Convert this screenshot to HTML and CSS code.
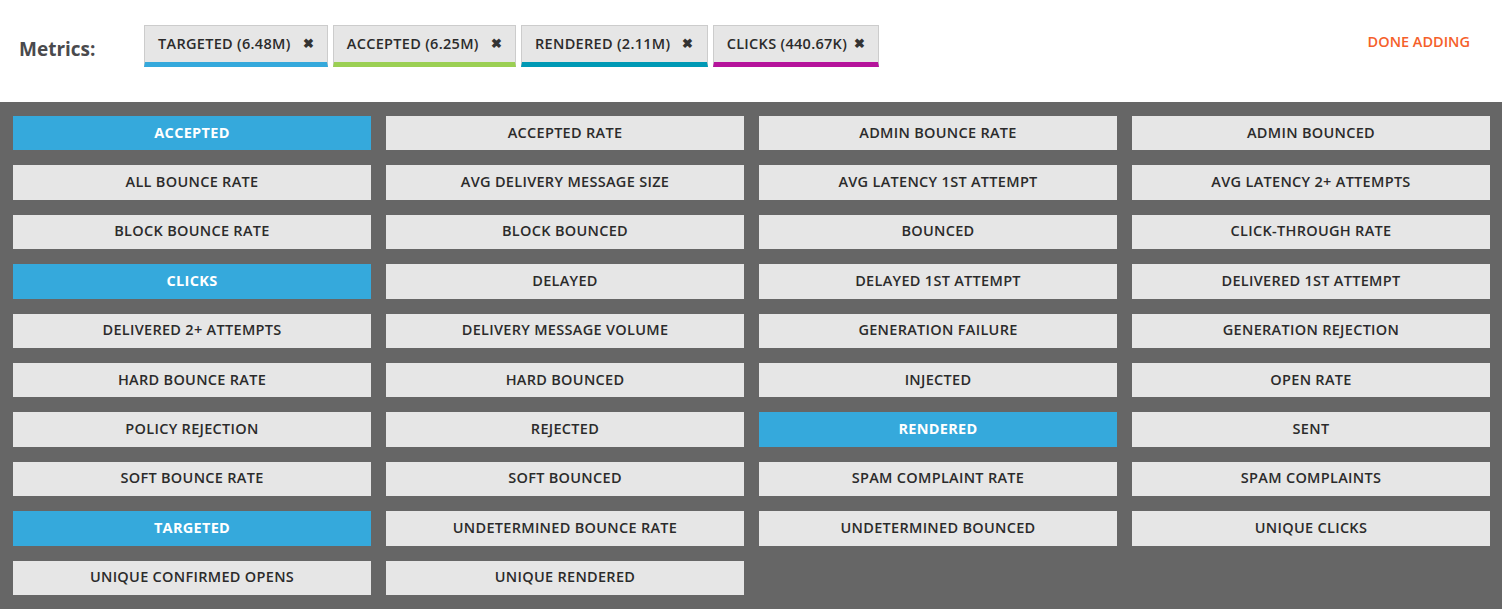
FILE: index.html
```html
<!DOCTYPE html>
<html>
<head>
<meta charset="utf-8">
<link rel="stylesheet" href="styles.css">
</head>
<body>
<div class="header">
  <div class="label">Metrics:</div>
  <div class="tags">
    <div class="tag tag-blue"><span class="tag-text">TARGETED (6.48M)</span><span class="x">&#10006;</span></div>
    <div class="tag tag-green"><span class="tag-text">ACCEPTED (6.25M)</span><span class="x">&#10006;</span></div>
    <div class="tag tag-teal"><span class="tag-text">RENDERED (2.11M)</span><span class="x">&#10006;</span></div>
    <div class="tag tag-pink"><span class="tag-text">CLICKS (440.67K)</span><span class="x">&#10006;</span></div>
  </div>
  <div class="done">DONE ADDING</div>
</div>
<div class="panel">
  <div class="grid">
    <div class="btn active">ACCEPTED</div>
    <div class="btn">ACCEPTED RATE</div>
    <div class="btn">ADMIN BOUNCE RATE</div>
    <div class="btn">ADMIN BOUNCED</div>
    <div class="btn">ALL BOUNCE RATE</div>
    <div class="btn">AVG DELIVERY MESSAGE SIZE</div>
    <div class="btn">AVG LATENCY 1ST ATTEMPT</div>
    <div class="btn">AVG LATENCY 2+ ATTEMPTS</div>
    <div class="btn">BLOCK BOUNCE RATE</div>
    <div class="btn">BLOCK BOUNCED</div>
    <div class="btn">BOUNCED</div>
    <div class="btn">CLICK-THROUGH RATE</div>
    <div class="btn active">CLICKS</div>
    <div class="btn">DELAYED</div>
    <div class="btn">DELAYED 1ST ATTEMPT</div>
    <div class="btn">DELIVERED 1ST ATTEMPT</div>
    <div class="btn">DELIVERED 2+ ATTEMPTS</div>
    <div class="btn">DELIVERY MESSAGE VOLUME</div>
    <div class="btn">GENERATION FAILURE</div>
    <div class="btn">GENERATION REJECTION</div>
    <div class="btn">HARD BOUNCE RATE</div>
    <div class="btn">HARD BOUNCED</div>
    <div class="btn">INJECTED</div>
    <div class="btn">OPEN RATE</div>
    <div class="btn">POLICY REJECTION</div>
    <div class="btn">REJECTED</div>
    <div class="btn active">RENDERED</div>
    <div class="btn">SENT</div>
    <div class="btn">SOFT BOUNCE RATE</div>
    <div class="btn">SOFT BOUNCED</div>
    <div class="btn">SPAM COMPLAINT RATE</div>
    <div class="btn">SPAM COMPLAINTS</div>
    <div class="btn active">TARGETED</div>
    <div class="btn">UNDETERMINED BOUNCE RATE</div>
    <div class="btn">UNDETERMINED BOUNCED</div>
    <div class="btn">UNIQUE CLICKS</div>
    <div class="btn">UNIQUE CONFIRMED OPENS</div>
    <div class="btn">UNIQUE RENDERED</div>
  </div>
</div>
</body>
</html>
```
FILE: styles.css
```css
* { box-sizing: border-box; }
html, body { margin: 0; padding: 0; }
body {
  width: 1502px;
  height: 609px;
  overflow: hidden;
  background: #fff;
  font-family: "Open Sans", "Liberation Sans", sans-serif;
  color: #333;
}
.header {
  height: 102px;
  display: flex;
  align-items: flex-start;
  padding: 25px 0 0 19px;
}
.label {
  font-family: "Open Sans", sans-serif;
  font-weight: 700;
  font-size: 19px;
  color: #4a4a4d;
  margin-top: 11px;
  width: 125px;
}
.tags {
  display: flex;
  gap: 5px;
  flex: 1;
}
.tag {
  display: flex;
  align-items: center;
  height: 42px;
  background: #e6e6e6;
  border: 1px solid #cccccc;
  border-bottom: 5px solid #35a9dc;
  padding: 0 13px 2px 13px;
  font-size: 14.5px;
  font-weight: 600;
  letter-spacing: 0.3px;
  color: #2b2b2b;
}
.tag-text { margin-right: 12px; }
.tag-pink .tag-text { margin-right: 7px; }
.tag-blue { border-bottom-color: #35a9dc; }
.tag-green { border-bottom-color: #9bcf53; }
.tag-teal { border-bottom-color: #0099b5; }
.tag-pink { border-bottom-color: #b5139b; }
.x {
  font-size: 13px;
  color: #333;
  line-height: 1;
}
.done {
  margin-top: 7px;
  margin-right: 32px;
  font-size: 14.5px;
  font-weight: 600;
  color: #f5602a;
}
.panel {
  background: #666666;
  height: 507px;
  padding: 14px 12px 0 13px;
}
.grid {
  display: grid;
  grid-template-columns: repeat(4, 358px);
  column-gap: 15px;
  row-gap: 15px;
  grid-auto-rows: 34.4px;
}
.btn {
  background: #e6e6e6;
  display: flex;
  align-items: center;
  justify-content: center;
  padding-bottom: 2px;
  font-size: 14.5px;
  font-weight: 600;
  letter-spacing: 0.3px;
  color: #2b2b2b;
}
.btn.active {
  background: #35a9dc;
  color: #fff;
  font-weight: 700;
}
```
